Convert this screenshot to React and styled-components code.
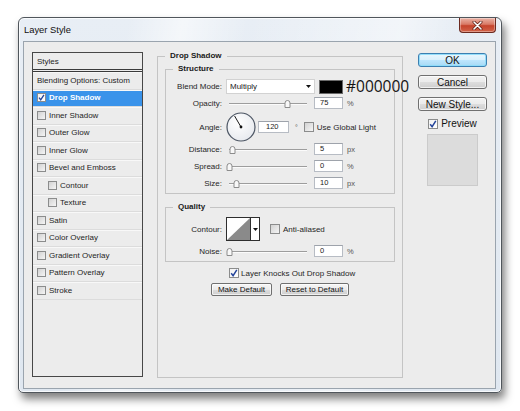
import React from 'react';
import styled, { createGlobalStyle } from 'styled-components';

const Global = createGlobalStyle`
  html, body { margin: 0; padding: 0; background: #fff; }
  body {
    width: 520px; height: 411px; overflow: hidden;
    font-family: "Liberation Sans", Arial, sans-serif;
  }
  * { box-sizing: border-box; }
`;

const Window = styled.div`
  margin: 17px 0 0 18px;
  width: 484px;
  height: 376px;
  border: 1px solid #50565c;
  border-radius: 6px 6px 5px 5px;
  background:
    linear-gradient(100deg, rgba(255,255,255,0) 20%, rgba(255,255,255,0.55) 30%, rgba(255,255,255,0) 42%, rgba(255,255,255,0.45) 70%, rgba(255,255,255,0) 80%),
    linear-gradient(180deg, #e8eef5 0%, #dfe7f0 100%);
  box-shadow: inset 0 0 0 1px rgba(255,255,255,0.75), 3px 6px 9px rgba(0,0,0,0.5);
  display: flex;
  flex-direction: column;
  padding: 0 5px 3px 4px;
`;

const TitleBar = styled.div`
  height: 23px;
  flex: none;
  display: flex;
  align-items: center;
  justify-content: space-between;
  padding-left: 1px;
`;

const Title = styled.span`
  font-size: 9.4px;
  color: #101010;
`;

const CloseBtn = styled.div`
  align-self: flex-start;
  width: 37px;
  height: 15px;
  border: 1px solid #6b2a20;
  border-top: none;
  border-radius: 0 0 4px 4px;
  background: linear-gradient(180deg, #eab3a6 0%, #d97a66 45%, #c5432c 55%, #d2644a 100%);
  box-shadow: inset 0 0 0 1px rgba(255,255,255,0.35);
  display: flex;
  align-items: center;
  justify-content: center;
`;

const Content = styled.div`
  height: 348px;
  flex: none;
  border: 1px solid #9aa4ae;
  background: #ececec;
  display: flex;
  align-items: flex-start;
  padding: 9px 0 0 8px;
`;

/* ---------- left style list ---------- */

const StyleList = styled.div`
  margin-top: 1px;
  width: 111px;
  height: 325px;
  border: 1px solid #474747;
  background: #ececec;
  flex: none;
`;

const ListHeader = styled.div`
  height: 19px;
  border-bottom: 3px double #3a3a3a;
  display: flex;
  align-items: center;
  padding-left: 4px;
  font-size: 8px;
  color: #1e1e1e;
`;

const Item = styled.div`
  height: 17.5px;
  display: flex;
  align-items: center;
  gap: 3px;
  padding-left: ${p => (p.$indent ? 15 : 4)}px;
  border-bottom: 1px solid #dcdcdc;
  box-shadow: inset 0 1px 0 #f8f8f8;
  background: ${p => (p.$sel ? '#3a93ea' : 'transparent')};
  color: ${p => (p.$sel ? '#fff' : '#1e1e1e')};
  font-weight: ${p => (p.$sel ? 700 : 400)};
  font-size: 8px;
  white-space: nowrap;
`;

/* ---------- checkbox ---------- */

const Box = styled.span`
  flex: none;
  width: ${p => p.$s}px;
  height: ${p => p.$s}px;
  margin-left: ${p => p.$ml || 0}px;
  border: 1px solid #8b8c8c;
  background: ${p => (p.$on
    ? 'linear-gradient(135deg, #f2f2f2, #ffffff)'
    : 'linear-gradient(135deg, #d2d2d2, #f5f5f5)')};
  display: inline-flex;
  align-items: center;
  justify-content: center;
`;

const Check = ({ on, size = 10, ml }) => (
  <Box $s={size} $on={on} $ml={ml}>
    {on && (
      <svg width={size - 2} height={size - 2} viewBox="0 0 8 8">
        <path d="M1.2 4.2 L3.1 6.6 L6.8 0.9" fill="none" stroke="#24449a" strokeWidth="1.5" />
      </svg>
    )}
  </Box>
);

/* ---------- centre group boxes ---------- */

const Group = styled.fieldset`
  margin: ${p => p.$mt || 0}px 0 0 ${p => p.$ml || 0}px;
  padding: ${p => p.$pad};
  border: 1px solid #c4c4c4;
  min-width: 0;
  ${p => (p.$h ? `height: ${p.$h}px;` : '')}
  ${p => (p.$w ? `width: ${p.$w}px; flex: none;` : '')}
`;

const Legend = styled.legend`
  padding: 0 5px;
  font: bold 8px/10px "Liberation Sans", Arial, sans-serif;
  color: #1a1a1a;
`;

const Row = styled.div`
  display: flex;
  align-items: center;
  height: ${p => p.$h}px;
  margin-bottom: ${p => p.$mb || 0}px;
  ${p => (p.$pl ? `padding-left: ${p.$pl}px;` : '')}
  ${p => (p.$center ? 'justify-content: center; gap: 8px;' : '')}
  margin-top: ${p => p.$mt || 0}px;
`;

const Label = styled.span`
  flex: none;
  width: 49px;
  margin-right: 4px;
  text-align: right;
  font-size: 8px;
  color: #262626;
  white-space: nowrap;
`;

const Text = styled.span`
  font-size: 8px;
  color: #262626;
  white-space: nowrap;
  margin-left: ${p => p.$ml || 0}px;
`;

const Unit = styled.span`
  font-size: 7.5px;
  color: #555;
  margin-left: 4px;
`;

const Select = styled.div`
  flex: none;
  width: 89px;
  height: 15px;
  background: #fff;
  border: 1px solid #d2d2d2;
  display: flex;
  align-items: center;
  justify-content: space-between;
  padding: 0 3px 0 3px;
  font-size: 8px;
  color: #1a1a1a;
`;

const Arrow = () => (
  <svg width="5" height="3" viewBox="0 0 5 3">
    <path d="M0 0 H5 L2.5 3 Z" fill="#111" />
  </svg>
);

const Swatch = styled.div`
  flex: none;
  width: 24px;
  height: 14px;
  margin-left: 4px;
  background: #000;
  border: 1px solid #6a6a6a;
`;

const Hex = styled.span`
  margin-left: 3px;
  font-family: "Open Sans", "Noto Sans", sans-serif;
  font-size: 15.5px;
  line-height: 1;
  color: #141414;
  white-space: nowrap;
  position: relative;
`;

const Field = styled.div`
  flex: none;
  width: ${p => p.$w}px;
  height: 12px;
  margin-left: ${p => p.$ml || 0}px;
  background: #fff;
  border: 1px solid #b7bcc4;
  border-top-color: #9ea3ab;
  padding-left: ${p => p.$pl || 5}px;
  font-size: 7.5px;
  line-height: 10px;
  color: #1a1a1a;
`;

const SliderWrap = styled.div`
  flex: none;
  position: relative;
  width: 84px;
  height: 10px;
  margin-right: 4px;
`;

const Track = styled.div`
  position: absolute;
  left: 3px;
  right: 3px;
  top: 5px;
  height: 1px;
  background: #9d9d9d;
  box-shadow: 0 1px 0 #fbfbfb;
`;

const Thumb = styled.svg`
  position: absolute;
  top: 1px;
`;

const Slider = ({ pos }) => (
  <SliderWrap>
    <Track />
    <Thumb width="7" height="9" viewBox="0 0 7 9" style={{ left: 3 + pos * 78 - 3.5 }}>
      <path d="M1 8.5 V4 A2.5 2.5 0 0 1 6 4 V8.5 Z" fill="#f8f8f8" stroke="#8c8c8c" strokeWidth="1" />
    </Thumb>
  </SliderWrap>
);

const Dial = styled.svg`
  flex: none;
`;

const Degree = styled.span`
  margin-left: 6px;
  font-size: 7px;
  color: #555;
  margin-right: 6px;
`;

const ContourPick = styled.div`
  flex: none;
  display: flex;
  height: 24px;
  border: 1px solid #2e2e2e;
  background: #fff;
`;

const ContourArrow = styled.div`
  width: 9px;
  border-left: 1px solid #2e2e2e;
  display: flex;
  align-items: center;
  justify-content: center;
`;

const SmallBtn = styled.div`
  height: 13px;
  width: ${p => p.$w}px;
  border: 1px solid #707070;
  border-radius: 2px;
  background: linear-gradient(180deg, #f6f6f6 0%, #ebebeb 50%, #dddddd 51%, #cfcfcf 100%);
  box-shadow: inset 0 0 0 1px rgba(255,255,255,0.7);
  display: flex;
  align-items: center;
  justify-content: center;
  font-size: 8px;
  color: #111;
`;

/* ---------- right column ---------- */

const Side = styled.div`
  margin: 2px 0 0 15px;
  width: 69px;
  flex: none;
  display: flex;
  flex-direction: column;
  align-items: center;
`;

const DlgBtn = styled.div`
  width: 69px;
  height: 14px;
  margin-bottom: 8px;
  border: 1px solid ${p => (p.$default ? '#3c7fb1' : '#707070')};
  border-radius: 3px;
  background: ${p => (p.$default
    ? 'linear-gradient(180deg, #eaf6fd 0%, #d9f0fc 50%, #bee6fd 51%, #a7d9f5 100%)'
    : 'linear-gradient(180deg, #f2f2f2 0%, #ebebeb 50%, #dddddd 51%, #cfcfcf 100%)')};
  box-shadow: inset 0 0 0 1px ${p => (p.$default ? 'rgba(140,220,250,0.9)' : 'rgba(255,255,255,0.7)')};
  display: flex;
  align-items: center;
  justify-content: center;
  font-size: 10px;
  color: #111;
`;

const PreviewRow = styled.div`
  margin-top: -1px;
  height: 11px;
  display: flex;
  align-items: center;
  gap: 3px;
  font-size: 10px;
  color: #111;
`;

const PreviewSwatch = styled.div`
  margin-top: 5px;
  width: 51px;
  height: 52px;
  background: #dcdcdc;
  border: 1px solid #cbcbcb;
`;

const styleItems = [
  { name: 'Drop Shadow', on: true, sel: true },
  { name: 'Inner Shadow' },
  { name: 'Outer Glow' },
  { name: 'Inner Glow' },
  { name: 'Bevel and Emboss' },
  { name: 'Contour', indent: true },
  { name: 'Texture', indent: true },
  { name: 'Satin' },
  { name: 'Color Overlay' },
  { name: 'Gradient Overlay' },
  { name: 'Pattern Overlay' },
  { name: 'Stroke' },
];

const SliderRow = ({ label, pos, value, unit, mb }) => (
  <Row $h={12} $mb={mb}>
    <Label>{label}</Label>
    <Slider pos={pos} />
    <Field $w={29}>{value}</Field>
    <Unit>{unit}</Unit>
  </Row>
);

export default function App() {
  return (
    <>
      <Global />
      <Window>
        <TitleBar>
          <Title>Layer Style</Title>
          <CloseBtn>
            <svg width="11" height="9" viewBox="0 0 11 9">
              <path d="M2 1 L9 8 M9 1 L2 8" stroke="#5a1c12" strokeWidth="3" strokeLinecap="round" />
              <path d="M2 1 L9 8 M9 1 L2 8" stroke="#fff" strokeWidth="1.6" strokeLinecap="round" />
            </svg>
          </CloseBtn>
        </TitleBar>
        <Content>
          <StyleList>
            <ListHeader>Styles</ListHeader>
            <Item>Blending Options: Custom</Item>
            {styleItems.map(it => (
              <Item key={it.name} $sel={it.sel} $indent={it.indent}>
                <Check on={!!it.on} size={9} />
                {it.name}
              </Item>
            ))}
          </StyleList>

          <Group $pad="3px 7px 0 7px" $h={327} $w={246} $ml={14}>
            <Legend>Drop Shadow</Legend>

            <Group $pad="5px 7px 4px 7px">
              <Legend>Structure</Legend>
              <Row $h={15} $mb={3}>
                <Label>Blend Mode:</Label>
                <Select>
                  Multiply
                  <Arrow />
                </Select>
                <Swatch />
                <Hex>#000000</Hex>
              </Row>
              <SliderRow label="Opacity:" pos={0.75} value="75" unit="%" mb={3} />
              <Row $h={30} $mb={1}>
                <Label>Angle:</Label>
                <Dial width="30" height="30" viewBox="0 0 30 30">
                  <defs>
                    <radialGradient id="dialFill" cx="0.4" cy="0.35" r="0.7">
                      <stop offset="0" stopColor="#ffffff" />
                      <stop offset="1" stopColor="#e6e9ee" />
                    </radialGradient>
                  </defs>
                  <circle cx="15" cy="15" r="14" fill="url(#dialFill)" stroke="#4c5563" strokeWidth="1.2" />
                  <line x1="15" y1="15" x2="8.6" y2="4" stroke="#1a1a1a" strokeWidth="1" />
                  <circle cx="15" cy="15" r="1.4" fill="#111" />
                </Dial>
                <Field $w={31} $ml={2} $pl={7}>120</Field>
                <Degree>°</Degree>
                <Check on={false} size={10} />
                <Text $ml={3}>Use Global Light</Text>
              </Row>
              <SliderRow label="Distance:" pos={0.04} value="5" unit="px" mb={5} />
              <SliderRow label="Spread:" pos={0} value="0" unit="%" mb={5} />
              <SliderRow label="Size:" pos={0.1} value="10" unit="px" />
            </Group>

            <Group $mt={8} $pad="5px 7px 4px 7px">
              <Legend>Quality</Legend>
              <Row $h={24} $mb={4}>
                <Label>Contour:</Label>
                <ContourPick>
                  <svg width="23" height="22" viewBox="0 0 23 22">
                    <polygon points="0,22 23,0 23,22" fill="#8a8a8a" />
                  </svg>
                  <ContourArrow>
                    <Arrow />
                  </ContourArrow>
                </ContourPick>
                <Check on={false} size={10} ml={10} />
                <Text $ml={3}>Anti-aliased</Text>
              </Row>
              <SliderRow label="Noise:" pos={0} value="0" unit="%" />
            </Group>

            <Row $h={12} $mt={5} $pl={64}>
              <Check on size={10} />
              <Text $ml={2}>Layer Knocks Out Drop Shadow</Text>
            </Row>
            <Row $h={13} $mt={4} $center>
              <SmallBtn $w={61}>Make Default</SmallBtn>
              <SmallBtn $w={69}>Reset to Default</SmallBtn>
            </Row>
          </Group>

          <Side>
            <DlgBtn $default>OK</DlgBtn>
            <DlgBtn>Cancel</DlgBtn>
            <DlgBtn>New Style...</DlgBtn>
            <PreviewRow>
              <Check on size={10} />
              Preview
            </PreviewRow>
            <PreviewSwatch />
          </Side>
        </Content>
      </Window>
    </>
  );
}
